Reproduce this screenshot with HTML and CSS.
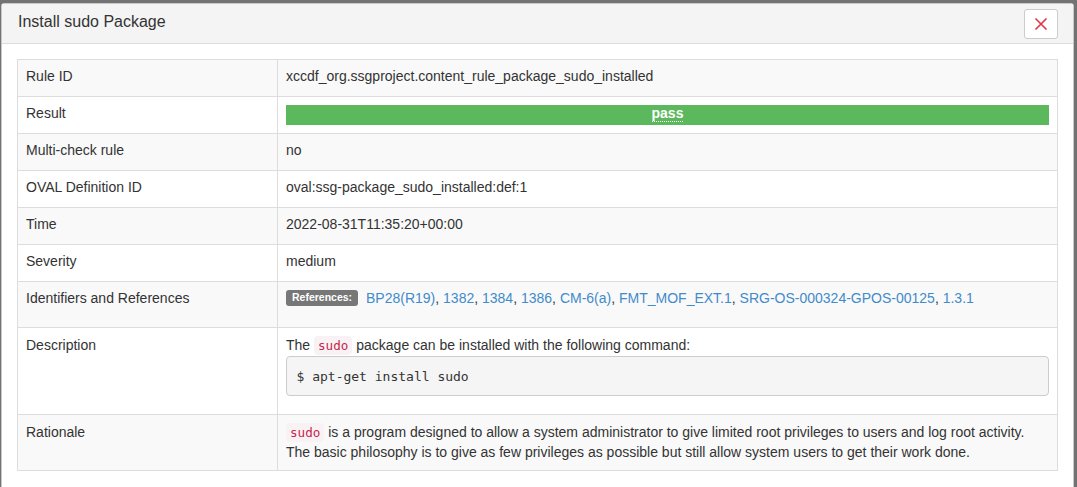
FILE: index.html
```html
<!DOCTYPE html>
<html>
<head>
<meta charset="utf-8">
<link rel="stylesheet" href="styles.css">
</head>
<body>
<div class="modal">
  <div class="modal-header">
    <h4 class="modal-title">Install sudo Package</h4>
    <button class="btn-close" type="button" aria-label="Close">
      <svg width="14" height="14" viewBox="0 0 14 14"><path d="M1.5 1.5 L12.5 12.5 M12.5 1.5 L1.5 12.5" stroke="#dc3545" stroke-width="1.6" fill="none"/></svg>
    </button>
  </div>
  <div class="modal-body">
    <table class="details">
      <tr><td class="key">Rule ID</td><td>xccdf_org.ssgproject.content_rule_package_sudo_installed</td></tr>
      <tr><td class="key">Result</td><td class="bar-cell"><div class="bar"><abbr class="pass">pass</abbr></div></td></tr>
      <tr><td class="key">Multi-check rule</td><td>no</td></tr>
      <tr><td class="key">OVAL Definition ID</td><td>oval:ssg-package_sudo_installed:def:1</td></tr>
      <tr><td class="key">Time</td><td>2022-08-31T11:35:20+00:00</td></tr>
      <tr><td class="key">Severity</td><td>medium</td></tr>
      <tr><td class="key">Identifiers and References</td><td><div class="refs"><span class="label">References:</span> <a href="#">BP28(R19)</a>, <a href="#">1382</a>, <a href="#">1384</a>, <a href="#">1386</a>, <a href="#">CM-6(a)</a>, <a href="#">FMT_MOF_EXT.1</a>, <a href="#">SRG-OS-000324-GPOS-00125</a>, <a href="#">1.3.1</a></div></td></tr>
      <tr class="tall"><td class="key">Description</td><td>The <code>sudo</code> package can be installed with the following command:<pre>$ apt-get install sudo</pre></td></tr>
      <tr class="tall"><td class="key">Rationale</td><td><code>sudo</code> is a program designed to allow a system administrator to give limited root privileges to users and log root activity. The basic philosophy is to give as few privileges as possible but still allow system users to get their work done.</td></tr>
    </table>
  </div>
</div>
</body>
</html>
```
FILE: styles.css
```css
html, body {
  margin: 0;
  padding: 0;
  height: 100%;
  overflow: hidden;
}
body {
  background: #737373;
  font-family: "Liberation Sans", Arial, sans-serif;
  font-size: 14px;
  line-height: 20px;
  color: #333;
  padding: 3px 4px 0 1px;
}
.modal {
  width: 1073px;
  box-sizing: border-box;
  background: #fff;
  border: 1px solid #c9c9c9;
  border-radius: 3px 3px 0 0;
  height: 600px;
}
.modal-header {
  display: flex;
  align-items: center;
  justify-content: space-between;
  background: #f4f4f4;
  border-bottom: 1px solid #dcdcdc;
  height: 39px;
  padding: 0 15px 0 16px;
}
.modal-title {
  margin: 0;
  font-size: 16px;
  font-weight: normal;
  color: #333;
  line-height: 20px;
  position: relative;
  top: -2px;
}
.btn-close {
  width: 34px;
  height: 30px;
  background: #fff;
  border: 1px solid #ccc;
  border-radius: 3px;
  display: flex;
  align-items: center;
  justify-content: center;
  padding: 0;
  margin-top: 1px;
}
.modal-body {
  padding: 15px;
}
.details {
  width: 100%;
  border-collapse: collapse;
  border: 1px solid #ddd;
}
.details td {
  border: 1px solid #ddd;
  padding: 6px 8px 10px;
  vertical-align: top;
}
.details tr.tall td {
  padding: 7px 8px 8px;
}
.details td.bar-cell {
  padding: 8px;
}
.details tr:nth-child(odd) td {
  background: #f9f9f9;
}
.details td.key {
  width: 243px;
}
.bar {
  background: #5cb85c;
  height: 20px;
  text-align: center;
  color: #fff;
  font-weight: bold;
  line-height: 17px;
}
.pass {
  text-decoration: none;
  border-bottom: 1px dotted #fff;
}
.refs {
  padding-bottom: 9px;
}
.label {
  display: inline-block;
  background: #777;
  color: #fff;
  font-size: 10.5px;
  font-weight: bold;
  line-height: 1;
  padding: 2px 6px 3px;
  border-radius: 3px;
  margin-right: 4px;
  vertical-align: 2px;
}
a {
  color: #428bca;
  text-decoration: none;
}
code {
  font-family: "DejaVu Sans Mono", monospace;
  font-size: 12.6px;
  line-height: 1;
  color: #c7254e;
  background: #f9f2f4;
  padding: 2px 4px;
  border-radius: 4px;
}
pre {
  margin: 1px 0 10px;
  padding: 9.5px;
  font-family: "DejaVu Sans Mono", monospace;
  font-size: 13px;
  line-height: 19px;
  color: #333;
  background: #f5f5f5;
  border: 1px solid #ccc;
  border-radius: 4px;
}
```
